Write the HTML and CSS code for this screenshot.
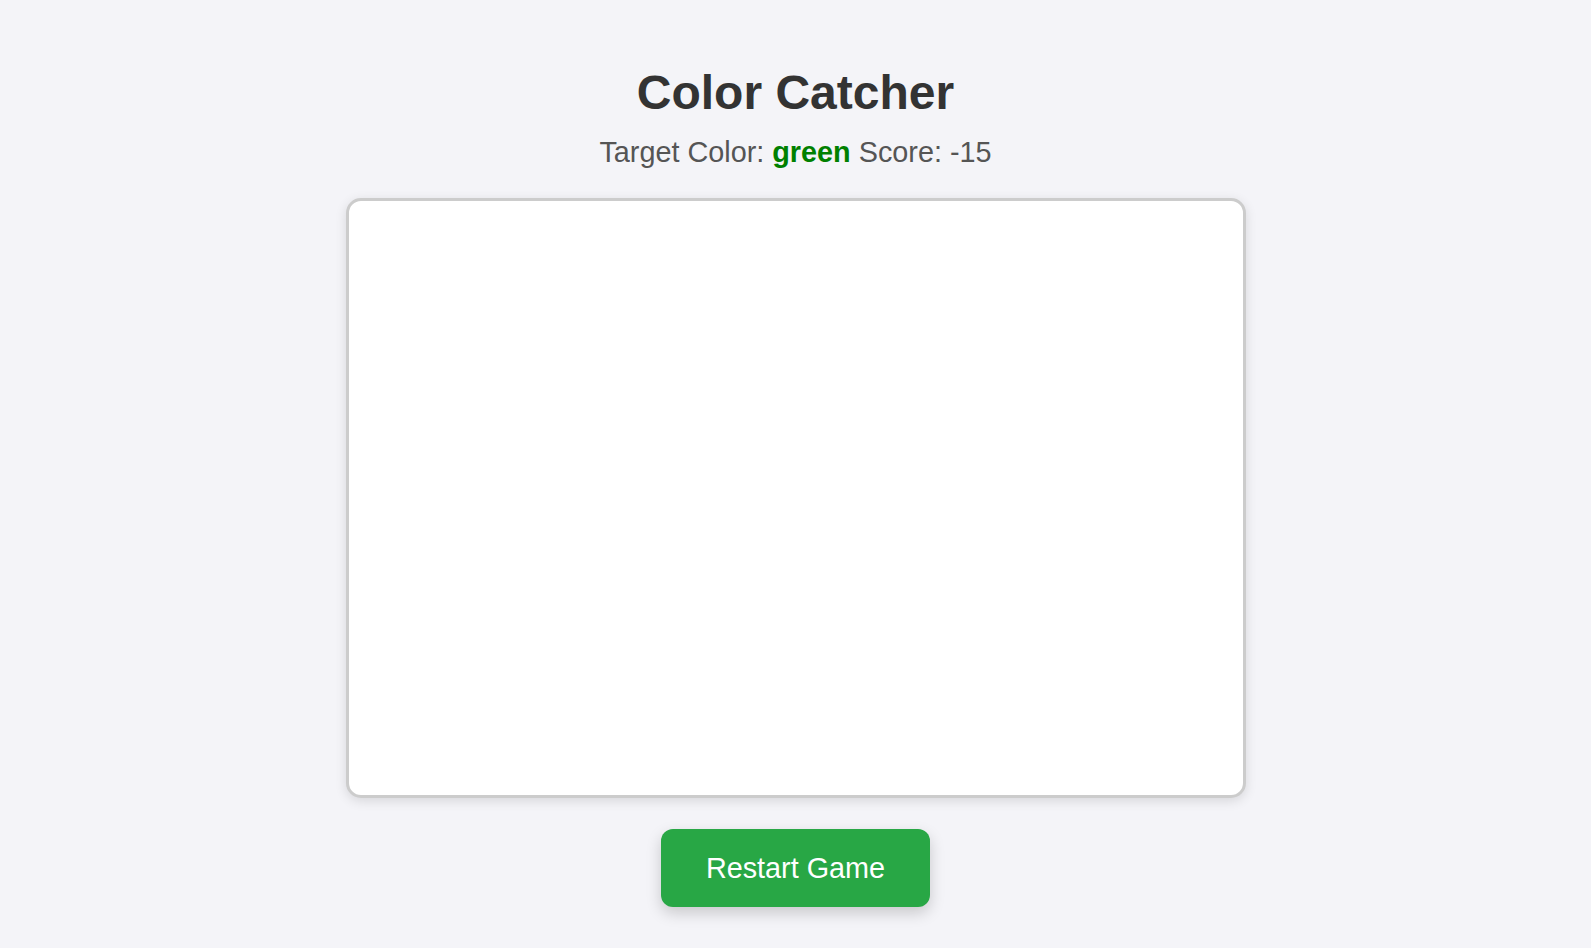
FILE: index.html
```html
<!DOCTYPE html>
<html lang="en">
<head>
<meta charset="utf-8">
<title>Color Catcher</title>
<link rel="stylesheet" href="styles.css">
</head>
<body>
<main class="game">
  <h1 class="title">Color Catcher</h1>
  <p class="status">Target Color: <span class="target">green</span> Score: <span class="score">-15</span></p>
  <div class="board"></div>
  <button class="restart" type="button">Restart Game</button>
</main>
</body>
</html>
```
FILE: styles.css
```css
html, body {
  margin: 0;
  padding: 0;
}
body {
  background: #f4f4f8;
  font-family: "Liberation Sans", Arial, sans-serif;
  color: #333;
}
.game {
  display: flex;
  flex-direction: column;
  align-items: center;
  padding-top: 65px;
  padding-bottom: 30px;
}
.title {
  margin: 0;
  font-size: 48px;
  font-weight: bold;
  color: #333;
  line-height: normal;
}
.status {
  margin: 16px 0 0;
  font-size: 28.8px;
  color: #555;
  line-height: normal;
}
.target {
  color: #008000;
  font-weight: bold;
}
.board {
  box-sizing: border-box;
  margin-top: 29px;
  width: 900px;
  height: 600px;
  background: #fff;
  border: 3px solid #ccc;
  border-radius: 15px;
  box-shadow: 0 3px 12px rgba(0, 0, 0, 0.12);
}
.restart {
  margin-top: 31px;
  font-family: "Liberation Sans", Arial, sans-serif;
  font-size: 28.8px;
  line-height: normal;
  padding: 22.5px 45px;
  color: #fff;
  background: #28a745;
  border: none;
  border-radius: 12px;
  box-shadow: 0 6px 15px rgba(0, 0, 0, 0.18);
  cursor: pointer;
}
```
